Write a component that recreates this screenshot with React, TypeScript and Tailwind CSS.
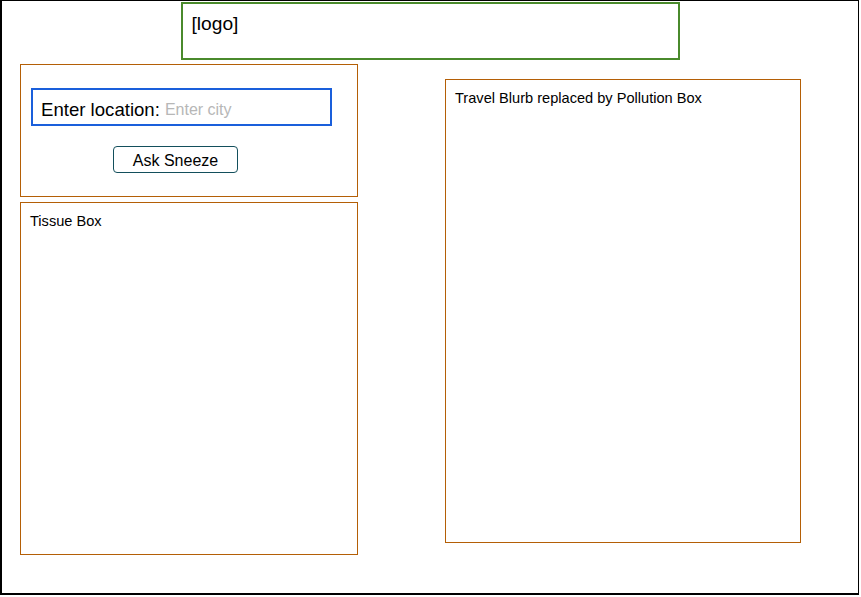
const App = () => {
  return (
    <div className="h-[597px] w-[861px] bg-white font-['Liberation_Sans',Arial,sans-serif] text-black">
      <div className="flex h-[595px] w-[859px] flex-col border border-b-2 border-l-2 border-black">
        <div className="mx-auto mt-[1px] h-[58px] w-[499px] border-2 border-[#4a8a2c] pl-[9px] pt-[9px] text-[19.2px] leading-[22px]">
          [logo]
        </div>

        <div className="flex">
          <div className="ml-[18px] mt-[4px] flex w-[338px] flex-col gap-[5px]">
            <section className="h-[133px] border border-[#b45f06] pl-[10px] pt-[23px]">
              <div className="flex h-[38px] w-[301px] items-center border-2 border-[#1a5fdb] pl-[8px] pt-[5px]">
                <span className="text-[18.6px]">Enter location:</span>
                <span className="ml-[5px] text-[16px] text-[#b7b7b7]">Enter city</span>
              </div>
              <button className="ml-[82px] mt-[20px] flex h-[27px] w-[125px] items-center justify-center rounded-[4px] border border-[#134f5c] pt-[3px] text-[16px]">
                Ask Sneeze
              </button>
            </section>

            <section className="h-[353px] border border-[#b45f06] pl-[9px] pt-[8px] text-[14.6px]">
              Tissue Box
            </section>
          </div>

          <section className="ml-[87px] mt-[19px] h-[464px] w-[356px] border border-[#b45f06] pl-[9px] pt-[8px] text-[14.6px]">
            Travel Blurb replaced by Pollution Box
          </section>
        </div>
      </div>
    </div>
  );
};

export default App;
